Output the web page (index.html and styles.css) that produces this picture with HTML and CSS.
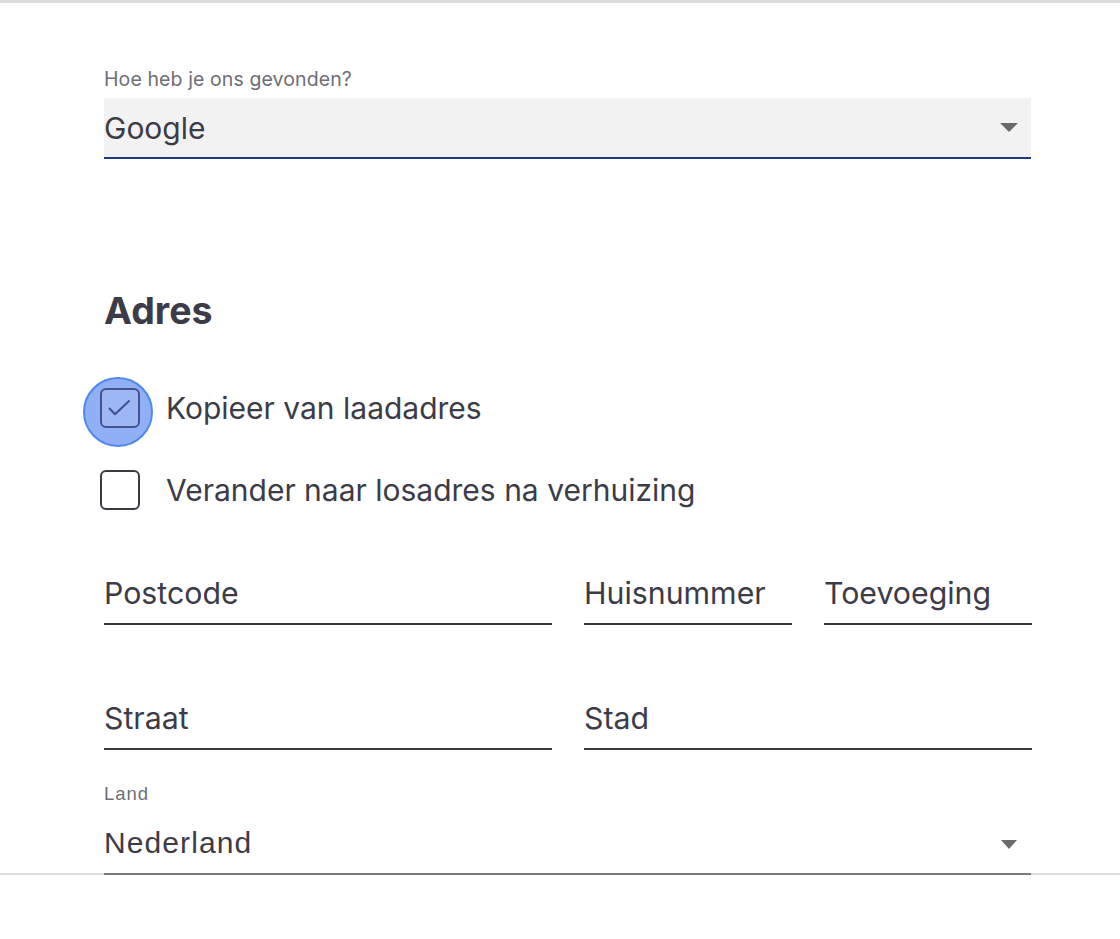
FILE: index.html
```html
<!DOCTYPE html>
<html lang="nl">
<head>
<meta charset="utf-8">
<title>Adres</title>
<link rel="stylesheet" href="styles.css">
</head>
<body>
<div class="page">
  <div class="form">
    <div class="field-select">
      <label class="small-label">Hoe heb je ons gevonden?</label>
      <div class="select filled">
        <span class="select-value">Google</span>
        <span class="arrow"></span>
      </div>
    </div>

    <h2 class="section-title">Adres</h2>

    <div class="check-row first">
      <span class="check-wrap">
        <span class="halo"></span>
        <span class="box checked">
          <svg viewBox="0 0 40 40" width="40" height="40"><path d="M9.5 20.5 L15 26.3 L29 13" fill="none" stroke="#3f5189" stroke-width="2" stroke-linecap="round" stroke-linejoin="round"/></svg>
        </span>
      </span>
      <span class="check-label">Kopieer van laadadres</span>
    </div>
    <div class="check-row second">
      <span class="check-wrap">
        <span class="box"></span>
      </span>
      <span class="check-label">Verander naar losadres na verhuizing</span>
    </div>

    <div class="row row-three">
      <div class="input"><span class="ph">Postcode</span></div>
      <div class="input"><span class="ph">Huisnummer</span></div>
      <div class="input"><span class="ph">Toevoeging</span></div>
    </div>
    <div class="row row-two">
      <div class="input"><span class="ph">Straat</span></div>
      <div class="input"><span class="ph">Stad</span></div>
    </div>

    <div class="field-country">
      <label class="country-label">Land</label>
      <div class="select plain">
        <span class="country-value">Nederland</span>
        <span class="arrow small"></span>
      </div>
    </div>
  </div>
</div>
</body>
</html>
```

FILE: styles.css
```css
html, body {
  margin: 0;
  padding: 0;
  background: #ffffff;
}
body {
  font-family: "Inter", "DejaVu Sans", sans-serif;
  color: #3c3b48;
}
.page {
  width: 1120px;
  height: 939px;
  border-top: 3px solid #dcdcdc;
  box-sizing: border-box;
}
.form {
  padding-left: 104px;
  padding-right: 89px;
  display: flex;
  flex-direction: column;
  border-bottom: 2px solid #dedede;
}
.small-label {
  display: block;
  font-size: 19.5px;
  line-height: 22px;
  letter-spacing: 0.1px;
  color: #6e6d76;
}
.field-select {
  padding-top: 65px;
}
.field-select .small-label {
  margin-bottom: 8px;
}
.select {
  display: flex;
  align-items: center;
  justify-content: space-between;
  box-sizing: border-box;
}
.select.filled {
  height: 61px;
  background: #f2f2f2;
  border-bottom: 2px solid #1e3a78;
  padding: 0 13px 0 0;
}
.select-value {
  font-size: 30px;
  line-height: 36px;
  color: #3c3b48;
}
.arrow {
  width: 0;
  height: 0;
  border-left: 9.5px solid transparent;
  border-right: 9.5px solid transparent;
  border-top: 9px solid #6a6a6a;
}
.arrow.small {
  border-left-width: 8.5px;
  border-right-width: 8.5px;
  border-top-width: 9px;
  margin-right: 14px;
  margin-top: 4px;
}
.section-title {
  margin: 130px 0 0 0;
  font-size: 37.5px;
  line-height: 44px;
  font-weight: 700;
  color: #3c3b48;
}
.check-row {
  display: flex;
  align-items: center;
  height: 40px;
  margin-left: -4px;
}
.check-row.first {
  margin-top: 55px;
}
.check-row.second {
  margin-top: 42px;
}
.check-wrap {
  position: relative;
  width: 40px;
  height: 40px;
  flex: 0 0 40px;
}
.halo {
  position: absolute;
  left: -17px;
  top: -11px;
  width: 70px;
  height: 70px;
  box-sizing: border-box;
  border-radius: 50%;
  background: #8fb0f7;
  border: 2px solid #4f87ee;
}
.box {
  position: absolute;
  inset: 0;
  box-sizing: border-box;
  border: 2px solid #3a3a42;
  border-radius: 6px;
  background: #ffffff;
}
.box.checked {
  background: #9cb6f6;
  border-color: #43538a;
}
.box svg {
  position: absolute;
  left: -2px;
  top: -2px;
}
.check-label {
  margin-left: 26px;
  font-size: 30px;
  line-height: 36px;
  color: #3c3b48;
}
.row {
  display: grid;
  column-gap: 32px;
}
.row-three {
  grid-template-columns: 448px 208px 208px;
  margin-top: 59px;
}
.row-two {
  grid-template-columns: 448px 448px;
  margin-top: 69px;
}
.input {
  height: 56px;
  box-sizing: border-box;
  border-bottom: 2px solid #3a3a42;
  padding-bottom: 12px;
  display: flex;
  flex-direction: column;
  justify-content: flex-end;
}
.ph {
  font-size: 30.3px;
  line-height: 36px;
  color: #3c3b48;
}
.field-country {
  margin-top: 34px;
}
.country-label {
  display: block;
  font-family: "Liberation Sans", Arial, sans-serif;
  font-size: 18.5px;
  line-height: 20px;
  letter-spacing: 1px;
  color: #6e6d76;
}
.select.plain {
  margin-top: 21px;
  margin-bottom: -2px;
  height: 50px;
  padding-bottom: 12px;
  border-bottom: 2px solid #7a7a7a;
  align-items: flex-end;
}
.country-value {
  font-family: "Liberation Sans", Arial, sans-serif;
  font-size: 30px;
  line-height: 36px;
  letter-spacing: 1.1px;
  color: #3c3b48;
}
.select.plain .arrow {
  margin-bottom: 12px;
}
```
